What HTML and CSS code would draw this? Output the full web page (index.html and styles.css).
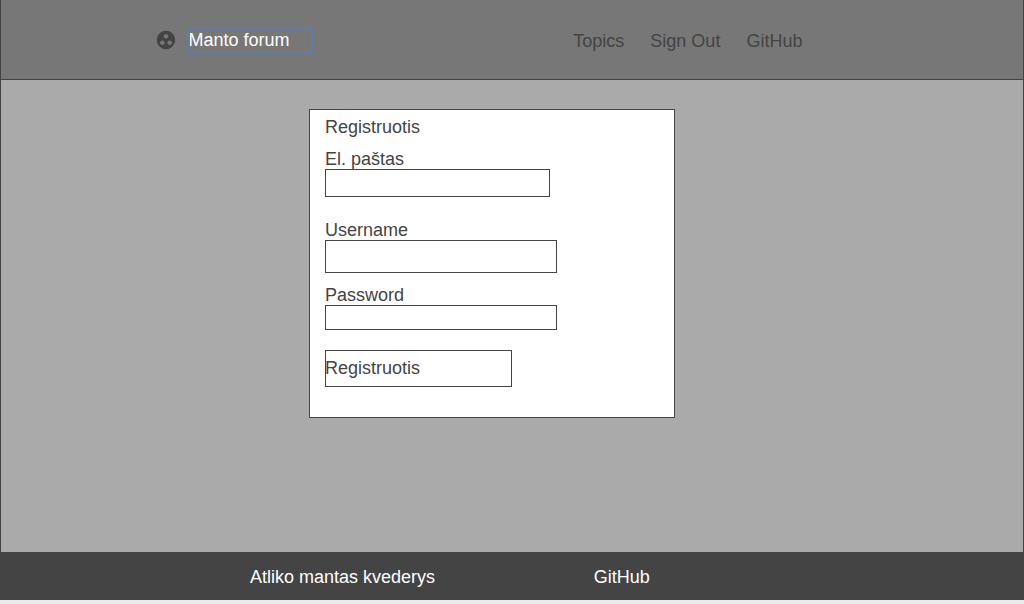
FILE: index.html
```html
<!DOCTYPE html>
<html lang="lt">
<head>
<meta charset="utf-8">
<meta name="viewport" content="width=device-width, initial-scale=1">
<title>Manto forum</title>
<link rel="stylesheet" href="styles.css">
</head>
<body>
<div class="page">
  <header class="header">
    <div class="brand">
      <svg class="brand-icon" viewBox="0 0 24 24" aria-hidden="true"><path fill-rule="evenodd" d="M12 2C6.480 2 2 6.480 2 12s4.480 10 10 10 10-4.480 10-10S17.520 2 12 2zM8 17.500c-1.380 0-2.500-1.120-2.500-2.500s1.120-2.500 2.500-2.500 2.500 1.120 2.500 2.500-1.120 2.500-2.500 2.500zM9.500 8c0-1.380 1.120-2.500 2.500-2.500s2.500 1.120 2.500 2.500-1.120 2.500-2.500 2.500S9.500 9.380 9.500 8zm6.500 9.500c-1.380 0-2.500-1.120-2.500-2.500s1.120-2.500 2.500-2.500 2.500 1.120 2.500 2.500-1.120 2.500-2.500 2.500z"/></svg>
      <a class="brand-name" href="#">Manto forum</a>
    </div>
    <nav class="nav">
      <a href="#">Topics</a>
      <a href="#">Sign Out</a>
      <a href="#">GitHub</a>
    </nav>
  </header>
  <main class="main">
    <form class="card">
      <h1 class="title">Registruotis</h1>
      <div class="field field-email">
        <label for="email">El. paštas</label>
        <input id="email" type="email">
      </div>
      <div class="field field-username">
        <label for="username">Username</label>
        <input id="username" type="text">
      </div>
      <div class="field field-password">
        <label for="password">Password</label>
        <input id="password" type="password">
      </div>
      <button class="submit" type="button">Registruotis</button>
    </form>
  </main>
  <footer class="footer">
    <span class="author">Atliko mantas kvederys</span>
    <a class="footer-link" href="#">GitHub</a>
  </footer>
</div>
</body>
</html>
```
FILE: styles.css
```css
* {
  box-sizing: border-box;
}

body {
  margin: 0;
  background: #ebebeb;
  color: #444;
  font: 18px/20px "Liberation Sans", Arial, sans-serif;
}

a {
  color: inherit;
  text-decoration: none;
}

.page {
  display: flex;
  flex-direction: column;
  min-height: calc(100vh - 4px);
  border: solid #444;
  border-width: 0 1px;
  background: #aaa;
}

.header {
  display: grid;
  grid-template-columns: 56% 1fr;
  align-items: center;
  min-height: 80px;
  border-bottom: 1px solid #444;
  background: #777;
}

.brand {
  display: flex;
  align-items: center;
  gap: 12px;
  padding-left: 27%;
}

.brand-icon {
  width: 22px;
  height: 22px;
  margin-left: -1px;
  fill: #444;
}

.brand-name {
  width: 123px;
  padding: 2px 0;
  outline: 2px solid #637ba8;
  outline-offset: -1px;
  color: #fff;
}

.nav {
  display: flex;
  gap: 26px;
  padding-top: 2px;
}

.main {
  display: grid;
  flex: 1;
  grid-template-columns: 308fr 366px 348fr;
  align-items: start;
  padding: 29px 0;
}

.card {
  grid-column: 2;
  padding: 7px 15px 30px;
  border: 1px solid #444;
  background: #fff;
}

.title {
  margin: 0 0 12px;
  font: inherit;
}

.field label {
  display: block;
}

.field input {
  display: block;
  width: 232px;
  margin: 0;
  padding: 0 4px;
  border: 1px solid #444;
  border-radius: 0;
  background: #fff;
  color: inherit;
  font: inherit;
}

.field-email {
  margin-bottom: 23px;
}

.field-email input {
  width: 225px;
  height: 28px;
}

.field-username {
  margin-bottom: 12px;
}

.field-username input {
  height: 33px;
}

.field-password {
  margin-bottom: 20px;
}

.field-password input {
  height: 25px;
}

.submit {
  display: block;
  width: 187px;
  height: 37px;
  padding: 0 0 2px;
  border: 0;
  border-radius: 0;
  box-shadow: inset 0 0 0 1px #444;
  background: #fff;
  color: inherit;
  font: inherit;
  text-align: left;
}

.footer {
  display: grid;
  grid-template-columns: 58% 1fr;
  align-items: center;
  min-height: 48px;
  padding-top: 2px;
  background: #444;
  color: #fff;
}

.author {
  padding-left: 42%;
}
```
